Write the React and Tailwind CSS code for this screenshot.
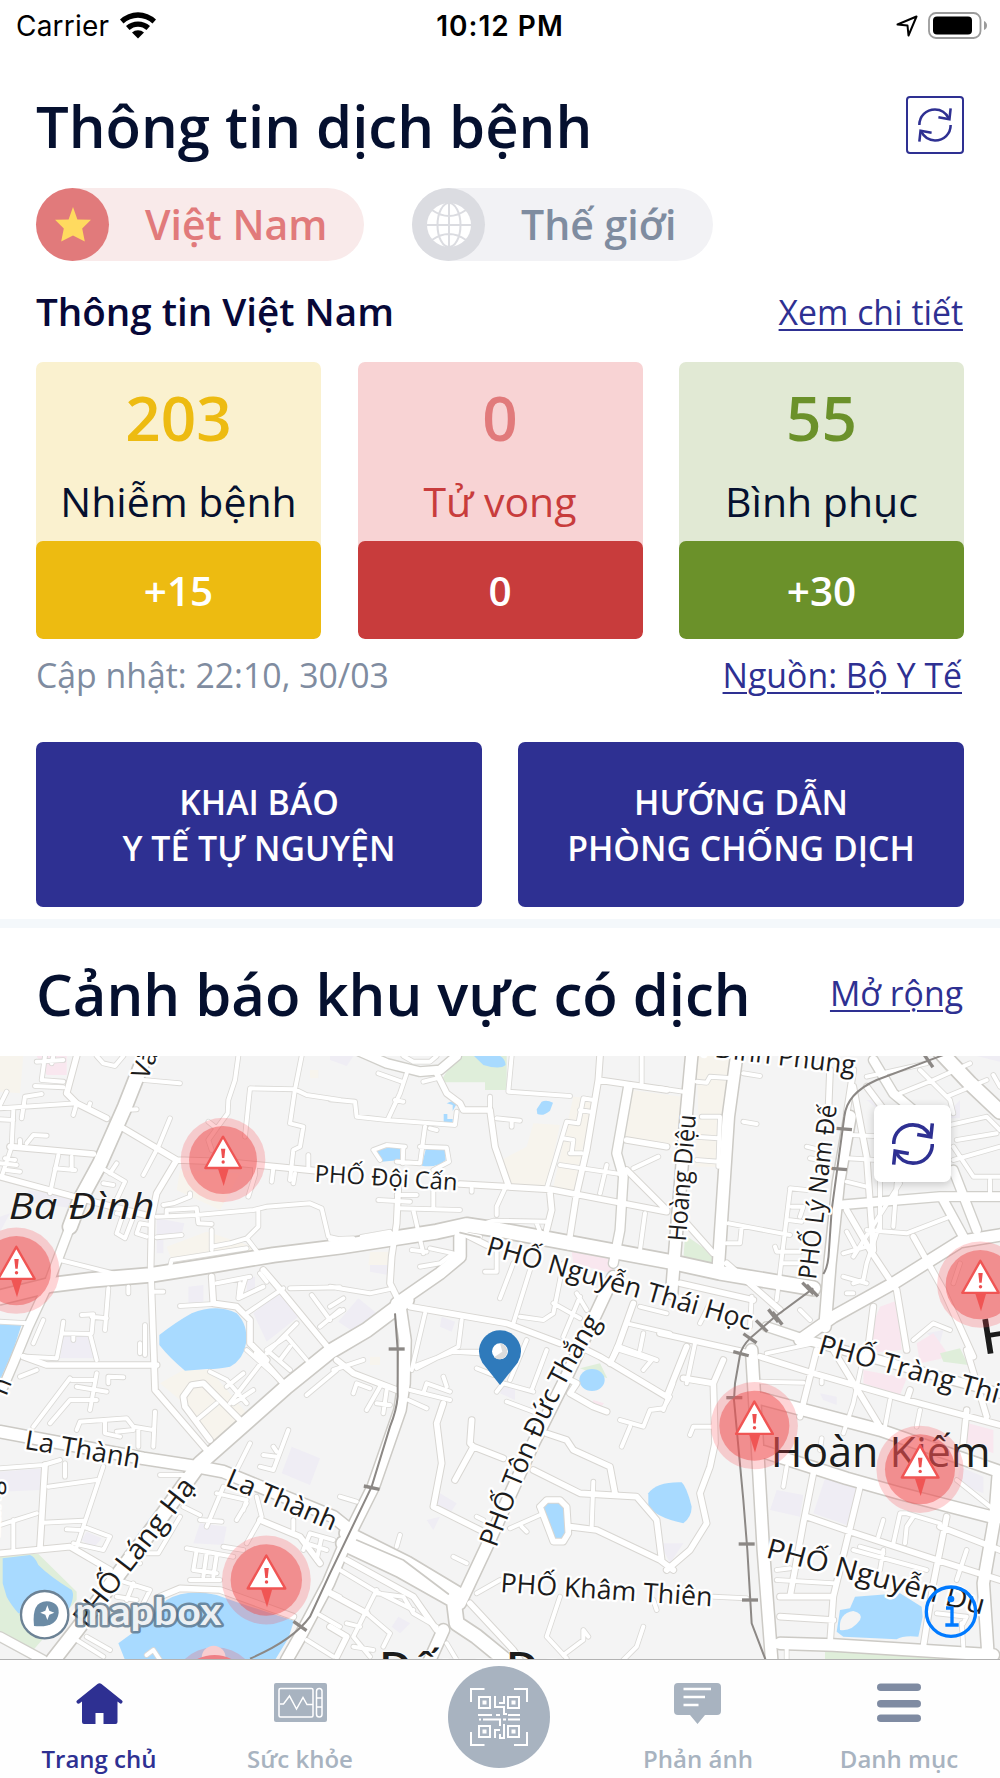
import React from 'react';

const stats = [
  { id: 'infected', total: '203', label: 'Nhiễm bệnh', delta: '+15', top: 'bg-[#faf1cf]', bottom: 'bg-[#edbb11]', number: 'text-[#edbb11]', text: 'text-[#05102f]' },
  { id: 'deaths', total: '0', label: 'Tử vong', delta: '0', top: 'bg-[#f8d3d4]', bottom: 'bg-[#c83c3c]', number: 'text-[#e17a7b]', text: 'text-[#c83c3c]' },
  { id: 'recovered', total: '55', label: 'Bình phục', delta: '+30', top: 'bg-[#e1e9d4]', bottom: 'bg-[#6b912a]', number: 'text-[#6b912a]', text: 'text-[#05102f]' },
];

// Map geometry, three units to a pixel
const smallRoads = [
  '0,175 230,160', '110,35 190,30', '125,90 190,95', '105,108 190,112', '135,18 125,90', '160,18 155,40',
  '65,205 75,140 125,132', '0,165 20,125', '40,180 35,290 5,380', '0,208 40,210', '80,280 100,255 140,257', '60,270 60,290',
  '175,315 150,430', '165,355 225,360', '215,320 215,360', '290,345 375,395 340,470', '330,370 350,340', '310,400 340,405',
  '430,90 540,100', '375,180 410,178', '510,205 475,290 430,375', '290,18 310,40 345,48 370,18',
  '715,18 705,90 685,150 683,190 650,235 625,215', '650,235 625,270 635,300', '735,260 750,115 885,118 920,135 1020,150',
  '905,18 885,118 870,220 910,230 900,290 880,300 870,390', '925,315 925,360', '745,440 765,375 765,350', '815,395 820,355',
  '885,370 880,400', '470,500 590,495 760,480 800,470 930,460 965,475 985,560 1020,568', '500,495 500,480 590,475 595,520 635,522',
  '490,465 520,460 570,440 570,430', '775,485 775,530 740,565 690,580 635,590', '635,540 635,600', '510,650 515,630 740,595',
  '740,565 775,610', '470,562 545,555', '350,550 375,565 400,500 350,490', '350,550 370,490', '410,550 420,520 450,525', '410,550 440,560',
  '180,630 340,670', '325,715 315,840', '245,795 280,793 275,850', '275,800 320,805', '190,815 185,850 270,852 290,930',
  '185,850 170,925 80,920', '220,855 220,870', '130,810 100,880', '0,815 85,820', '455,725 490,725', '385,710 385,730',
  '540,768 640,762', '650,700 750,680', '720,700 715,745 790,710', '735,690 720,740', '780,670 800,695', '850,715 740,790', '870,715 1020,712',
  '935,735 990,810', '960,830 1020,780', '800,910 890,820', '270,160 265,175', '220,195 230,160', '435,825 435,915', '420,880 420,910',
  '0,340 50,345', '20,360 60,365', '15,325 45,330', '990,770 1030,745', '1000,800 1030,780',
  '800,900 860,860 920,930', '840,930 870,890',
  '1210,18 1240,35 1290,35 1310,18', '1470,180 1470,140', '1490,205 1560,212', '1535,215 1535,230',
  '1370,185 1365,225 1160,210 1070,200 1065,155 990,148', '1220,70 1200,130 1165,205', '1135,70 1205,95', '1185,150 1210,155',
  '1270,95 1310,85', '1275,230 1260,340 1190,335', '1260,290 1340,293 1347,335 1300,360', '1210,290 1208,340',
  '1120,300 1160,285 1215,290', '1120,300 1140,330', '1290,235 1310,240', '1535,18 1525,125 1710,138', '1925,18 1925,100',
  '1640,415 1700,215 1735,220 1750,145 1780,150', '1690,265 1720,270 1715,310', '1740,180 1770,185', '1710,310 1745,310',
  '1680,345 1860,372', '1420,530 1480,512 1640,515', '1515,415 1490,470 1490,495', '1900,355 1975,320',
  '1820,345 1800,430', '1935,490 1920,600', '1135,450 1230,455', '1190,435 1250,435', '1200,475 1380,480', '1300,420 1300,475',
  '1240,480 1270,610', '1235,600 1280,605', '1085,560 1170,545', '990,568 1060,565', '1415,415 1415,425', '990,710 1110,730 1180,715',
  '1540,820 1590,660', '1500,745 1540,640', '1455,665 1490,665 1490,600', '1560,800 1630,810 1660,790 1690,640', '1660,760 1740,805',
  '1690,860 1740,740', '1730,730 1760,780', '1275,790 1235,960', '1385,810 1375,890 1250,955', '1385,905 1450,905',
  '1290,595 1360,610 1320,640 1260,650', '1880,820 2010,850', '1930,850 1920,900', '1860,890 1970,930', '1920,770 2000,790',
  '1610,520 1620,545', '1380,550 1440,560',
  '2090,95 2120,98 2130,80 2200,85', '2230,70 2280,78', '1980,115 2050,125', '2230,215 2270,222', '2085,260 2155,265',
  '2105,200 2160,200 2155,350', '2090,330 2155,335', '2185,520 2370,555', '2225,530 2220,580 2180,580', '2370,420 2330,750',
  '2370,415 2420,420', '2375,470 2410,470 2400,500', '2365,510 2405,515', '2325,590 2330,605 2400,605', '2350,640 2400,640',
  '2420,290 2460,300', '2430,325 2460,330', '2255,740 2250,830', '2130,760 2100,820', '2550,255 2620,258', '2545,325 2630,330',
  '2540,395 2600,410', '2690,400 2680,530', '2600,540 2720,550 2850,500', '2530,610 2600,590', '2540,545 2570,600',
  '2530,680 2600,700', '2600,640 2590,690 2560,700', '2540,730 2560,730', '2700,130 2800,90 2910,40', '2840,140 2960,90', '2600,80 2780,40',
  '2760,60 2850,150 2860,190', '2980,75 3000,110', '2850,225 2960,200 3000,240', '2870,270 2990,250', '2860,330 3000,290',
  '2860,290 2920,380 3000,380', '2970,390 2970,440', '2740,870 2800,820 2850,840', '2085,880 2060,1000', '2440,880 2300,910',
  '2600,640 2640,520', '2880,640 2860,700', '2400,780 2430,810', '2590,920 2560,1060 2530,1150', '2640,300 2640,540', '2560,620 2700,400',
  '60,980 110,960', '100,1130 210,985', '150,1120 210,1050 290,1050', '290,970 270,1080', '230,1010 320,1025', '215,990 280,990',
  '325,1000 325,980 370,982', '230,1140 240,1115 380,1105 400,1130 460,1140', '465,1085 460,1190', '315,1110 315,1150 360,1160',
  '350,1145 400,1140', '415,1140 415,1190', '0,1255 130,1245 180,1230', '195,1240 195,1280', '145,1310 290,1290', '310,1250 230,1490',
  '0,1425 110,1390', '130,1418 250,1412', '200,1438 240,1440', '250,1430 330,1460 310,1500 220,1480', '40,1410 40,1500',
  '590,1110 650,1060', '630,965 680,990 740,1060', '690,1060 790,930', '680,1010 730,970', '700,1060 760,1020', '740,900 830,980',
  '800,900 870,960', '820,1190 830,1205', '920,1035 1010,960', '865,1140 820,1260 780,1250', '790,1215 830,1220', '750,1180 710,1260',
  '480,1275 560,1275', '670,1310 620,1430', '600,1410 665,1415', '550,1370 600,1395', '650,1330 740,1350 730,1380', '770,1340 785,1400 740,1480',
  '740,1360 710,1410', '880,1410 880,1440', '910,1500 930,1450 1000,1470', '920,1480 980,1500', '965,1460 950,1530',
  '560,1495 700,1520', '590,1500 580,1560 650,1570', '620,1510 610,1580', '650,1515 640,1580', '570,1590 660,1590', '670,1490 730,1500',
  '380,1510 420,1540', '440,1510 475,1510 540,1400', '370,1595 450,1620 430,1660', '350,1640 410,1650', '400,1600 380,1650',
  '230,1770 310,1820', '260,1760 330,1800', '440,1815 460,1800 480,1830', '950,1690 1020,1730', '980,1620 1020,1640', '920,1770 1000,1820',
  '1000,960 1090,930', '1060,1030 1070,1000 1110,1015', '1100,1080 1140,1010', '1150,1090 1160,1020', '1130,1060 1170,1065',
  '1230,1020 1350,1050', '1225,1050 1280,1075', '1270,1030 1280,1000 1350,1025', '1330,980 1340,1010', '1240,950 1360,905 1440,910',
  '1430,955 1480,975', '1490,1025 1510,1000 1600,1025', '1520,1055 1600,1085', '1595,1020 1640,900', '1530,990 1580,870',
  '1830,940 1850,890', '1930,960 1955,930 1860,900', '1860,1110 1930,1130 1950,1080 1990,1075 2010,1040', '1890,1130 1865,1190',
  '1780,1295 1775,1430', '1530,1435 1620,1395', '1565,1430 1580,1445', '1020,1340 1070,1355', '1190,1490 1200,1455',
  '1360,1520 1400,1540', '1430,1400 1450,1410', '1430,1630 1500,1590', '1680,1640 1640,1760 1700,1825', '1690,1815 1750,1770 1750,1740 1765,1760',
  '1930,1730 1910,1790 1870,1830', '1970,1680 1960,1650', '1020,1560 1120,1620 1240,1680', '1130,1620 1060,1760',
  '1130,1630 1210,1640 1240,1690 1310,1730', '1100,1690 1170,1750 1150,1790', '1060,1790 1120,1800', '1040,1720 1080,1730', '1340,1780 1370,1830',
  '1060,1760 1110,1820', '2145,1130 2080,1130 2070,1155', '2280,995 2410,998', '2670,1050 2655,1130', '2760,1080 2750,1130',
  '2870,1290 2970,1370', '2650,1410 2635,1460', '2680,1480 2700,1390 2720,1390 2820,1420', '2740,1400 2720,1430 2715,1480',
  '2560,1500 2780,1560', '2650,1500 2640,1560', '2900,1500 2870,1590', '2140,1640 2240,1645', '2330,1560 2370,1555',
  '2330,1590 2500,1600', '2360,1790 2360,1830', '2885,1720 2890,1790', '2810,1690 2900,1700 2890,1720', '2465,1165 2460,1200', '2360,1250 2350,1310',
  '2650,1510 2580,1490', '2465,990 2465,1000', '1990,1080 2020,1000',
];

const mediumRoads = [
  '230,18 200,130 230,160 320,205', '30,290 280,312', '0,380 240,445 455,500', '370,235 530,330 470,430 455,500 452,650 462,930 465,1020 620,1200',
  '530,330 670,335 945,362', '635,680 640,760 710,770 750,810 750,880 800,930', '790,660 850,730 990,900',
  '1310,70 1340,130 1380,160 1390,180 1470,180 1485,290 1525,405', '1800,18 1795,90 2000,120', '1795,90 1760,300 1730,430 1705,590',
  '1380,402 1650,418 2000,485', '1650,430 1655,480 1640,540', '1195,410 1190,520 1175,620 1170,700 1195,750', '1230,770 1520,820 1680,880',
  '1880,270 2000,290', '1880,360 2000,480', '1900,760 1850,900 1830,940', '1380,545 1460,585', '1740,890 1800,920 2000,1040 2020,990 2060,890',
  '2060,520 2140,610', '2180,640 2340,780', '2040,700 2260,750', '2560,110 2600,320 2620,600', '2600,110 2660,190', '2540,480 2610,600 2690,720 2720,900',
  '2740,560 2830,720 2920,920', '2620,770 2600,930', '2490,60 2485,190', '2560,60 2540,190',
  '70,920 140,945 470,945', '630,1170 555,1070 550,1040 575,1005 610,1000 720,1110', '770,910 850,1000', '135,1245 120,1490',
  '0,1510 210,1490 330,1560', '780,1410 900,1460 960,1540', '480,1640 540,1615 660,1620 880,1700', '1010,930 1060,970 1190,1020',
  '1330,1060 1310,1120 1325,1240 1300,1370 1440,1440', '1415,1110 1410,1180 1420,1190 1510,1225', '1420,1190 1365,1290',
  '1690,980 1730,1000 1710,1030 1780,1070 1820,1085', '1640,1150 1700,1170 1720,1200 1830,1250 1845,1330',
  '1600,1260 1740,1330 1910,1340 1970,1410 1985,1530', '1620,1370 1640,1350 1680,1350 1700,1370 1705,1450 1690,1475 1660,1475 1620,1370',
  '1710,1430 1790,1440 1980,1530 2020,1560', '1410,1660 1540,1800 1560,1830', '1040,1530 1240,1640 1310,1740', '990,1630 1100,1690',
  '990,1730 1040,1760 1010,1820', '2170,930 2140,1000 2050,985', '2140,1000 2145,1180 2130,1250 2100,1330 2120,1420 2070,1500 2000,1560',
  '1980,850 2250,910', '2500,900 2640,1130', '2450,900 2400,1100', '2900,1080 2890,1180', '2730,1020 2720,1050',
  '2440,1270 2410,1420 2370,1640', '2580,1310 2500,1640 2490,1780', '2840,1400 2800,1600 2770,1790', '2820,1430 3000,1500',
  '2340,1640 2500,1640', '2340,1700 2500,1710', '2420,1400 2550,1445 2810,1530 3000,1590', '2960,1100 2900,900',
  '2280,920 2440,970 2580,1010 2720,1050 3000,1125',
];

const largeRoads = [
  '1080,5 1160,40 1260,65 1320,60 1370,18', '2620,30 2680,130 2740,180', '2520,465 2820,440 3000,440', '2830,450 2890,560', '2860,360 2930,540',
  '210,530 150,690 85,830 40,940 10,1010', '0,1760 130,1830', '1885,110 1850,310 1870,380 1860,540 1840,640', '2300,830 2420,870 3000,1030',
];

const majorRoads = [
  '0,1145 80,1160 430,1225 590,1250 670,1265 1000,1400 1050,1440', '2075,18 2060,180 2025,600 2015,730', '2210,18 2185,200 2155,650',
  '2550,200 2515,400 2490,640 2475,830', '2400,870 2500,800 2680,700 2880,575 3000,555', '2255,900 2270,1150 2290,1500 2315,1830',
  '2280,1045 2640,1140 3000,1265', '2290,1205 2430,1250 2540,1285 2700,1330 2990,1405', '2340,1780 2500,1785 2980,1815',
  '2995,1270 2985,1400 2950,1600 2965,1830', '1200,770 1215,870 1212,1000 1200,1080 1120,1310 1040,1470 985,1600 900,1760 860,1830',
  '1380,1660 1460,1490 1600,1180 1690,1000 1840,680', '1330,1740 1285,1840', '1380,560 1380,620 1320,670 1190,760',
];

const trunkRoads = [
  '440,5 375,170 300,340 240,450 210,530', '0,742 150,705 270,690 450,675 640,645 820,615 1020,590 1310,545 1400,525 1500,540 2010,635 2160,668 2440,715',
  '1220,750 1100,840 990,905 860,1010 600,1240 470,1420 230,1740 160,1830', '2820,5 2910,100 3000,185',
  '1030,1480 1200,1560 1360,1650', '1040,1450 1220,1540 1370,1630', '1360,1640 1370,1720 1430,1760 1540,1850',
];

const toPath = (roads) => roads.map((road) => `M${road}`).join(' ');

const roadLayers = [
  { d: toPath(smallRoads), width: 12, casing: 17, color: '#dad9d6' },
  { d: toPath(mediumRoads), width: 17, casing: 23, color: '#d8d6d2' },
  { d: toPath(largeRoads), width: 26, casing: 34, color: '#d0cfca' },
  { d: toPath(majorRoads), width: 34, casing: 43, color: '#cccac5' },
  { d: toPath(trunkRoads), width: 41, casing: 51, color: '#cccac5' },
];

const railPaths = [
  'M1185,790 L1193,900 L1193,1040 Q1190,1080 1170,1130 L1115,1310 L990,1570 L930,1700 Q880,1770 750,1826',
  'M2830,15 L2785,32 L2630,90 Q2540,130 2533,200 L2495,480 L2487,600 Q2485,650 2470,672 M2440,715 L2325,800 L2250,865 Q2225,890 2220,915 L2205,1000 L2202,1050 L2230,1350 L2242,1500 L2255,1720 L2297,1830',
];

const railTicks = [
  [1190, 897, 0], [1115, 1313, 12], [900, 1728, 35], [2785, 32, 55], [2532, 237, 5], [2517, 357, 5], [2424, 715, 45], [2437, 722, 45],
  [2320, 797, 52], [2332, 805, 52], [2285, 828, 45], [2250, 865, 35], [2223, 911, 15], [2203, 1043, 0], [2240, 1482, 0], [2250, 1650, 0],
];

const mapLabels = [
  { text: 'Văn Cao', x: 447, y: 90, angle: -68, size: 76 },
  { text: 'PHỐ Đội Cấn', x: 948, y: 393, angle: 3.5, length: 429, size: 71 },
  { text: 'Hoàng Diệu', x: 2062, y: 573, angle: -85.4, length: 380, size: 76 },
  { text: 'PHỐ Lý Nam Đế', x: 2453, y: 688, angle: -83.2, length: 526, size: 76 },
  { text: 'Phan Đình Phùng', x: 2568, y: 71, angle: 7, anchor: 'end', size: 78 },
  { text: 'PHỐ Nguyễn Thái Học', x: 1460, y: 611, angle: 16, length: 826, size: 80 },
  { text: 'La Thành', x: 76, y: 1194, angle: 9.7, length: 350, size: 80 },
  { text: 'La Thành', x: 678, y: 1304, angle: 23, length: 352, size: 80 },
  { text: 'PHỐ Láng Hạ', x: 265, y: 1735, angle: -52.3, length: 540, size: 84 },
  { text: 'PHỐ Khâm Thiên', x: 1505, y: 1624, angle: 3.9, length: 637, size: 80 },
  { text: 'PHỐ Nguyễn Du', x: 2300, y: 1520, angle: 14.8, length: 674, size: 84 },
  { text: 'PHỐ Tràng Thi', x: 2456, y: 907, angle: 15.7, length: 560, size: 82 },
  { text: 'n', x: 42, y: 994, angle: -68, anchor: 'end', size: 78 },
  { text: 'Láng', x: 6, y: 1290, angle: -88, anchor: 'end', size: 78 },
];

const alerts = [
  [669, 330, 1], [49, 662, 1.02], [2941, 704, 1.02], [2263, 1127, 1.03], [2760, 1258, 1.03], [799, 1590, 1.05], [645, 1925, 1.05],
];

const RefreshIcon = ({ className, strokeWidth = 7.5 }) => (
  <svg viewBox="0 0 100 100" className={className} fill="none" stroke="#2e3092" strokeWidth={strokeWidth}>
    <path d="M4 50C4 24 24 4.500 50 4.500C68 4.500 82 14 91 31" />
    <path d="M96 1L92.500 33L60 27.500" />
    <path d="M96 50C96 76 76 95.500 50 95.500C32 95.500 18 86 9 69" />
    <path d="M4 99L7.500 67L40 72.500" />
  </svg>
);

const AlertMarker = ({ x, y, scale }) => (
  <g transform={`translate(${x} ${y}) scale(${scale})`}>
    <circle r="127" fill="#fa4d55" fillOpacity="0.24" />
    <circle r="102" fill="#ee5252" fillOpacity="0.5" />
    <path d="M-15 26H17L2 78Z" fill="#f05554" />
    <path d="M0 -70L-53 24H54Z" fill="#fff" stroke="#f05554" strokeWidth="7" strokeLinejoin="round" />
    <path d="M-6 -34H7L4 -6H-3Z" fill="#ee4f4f" />
    <circle cx="0.500" cy="6" r="5" fill="#ee4f4f" />
  </g>
);

const MapCanvas = () => (
  <svg viewBox="0 18 3000 1809" className="block h-full w-full">
    <rect y="18" width="3000" height="1812" fill="#f4f4f4" />

    {/* Land use */}
    <g fill="#f7f4ed">
      <path d="M0 18H70L60 130L0 125Z" />
      <path d="M540 360L720 370L660 480L530 420Z" />
      <path d="M500 590L620 545L760 590L740 620L520 645Z" />
      <path d="M1110 605H1165V645H1105Z" />
      <path d="M1600 220L1680 225L1640 410L1520 400L1505 330L1580 290Z" />
      <path d="M1720 140L1780 145L1720 425L1660 410Z" />
      <path d="M1895 120L2045 140L2035 290L1875 260Z" />
      <path d="M2090 18H2200L2190 200L2150 350H2085L2095 200Z" />
      <path d="M480 1000L550 960H630L740 1090L640 1180L590 1130L540 1050Z" />
      <path d="M930 60h25v25h-25zM1110 920h30v25h-30z" />
    </g>
    <g fill="#efedf4">
      <path d="M85 420L225 440L215 475L85 455Z" />
      <path d="M470 505L553 520L545 555H470ZM470 570H490V610H470Z" />
      <path d="M565 710L610 705V760H565ZM740 680H765V730H740Z" />
      <path d="M760 790L835 725L895 800L800 875Z" />
      <path d="M190 855H275L280 925H180ZM0 500L30 490L0 545Z" />
      <path d="M0 1265L130 1255L120 1320L0 1325ZM875 1190L960 1225L930 1305L845 1270Z" />
      <path d="M600 1420L680 1430L670 1485L580 1480ZM260 1445L305 1465L280 1495L245 1470Z" />
      <path d="M1075 745L1130 790L1060 845L1015 815ZM1110 645H1165V675L1110 665Z" />
      <path d="M1325 800L1365 815L1355 845L1320 830ZM1510 1010H1545V1050L1500 1030Z" />
      <path d="M1320 1330L1370 1360L1350 1390L1310 1370ZM1280 1410L1320 1400L1300 1440ZM1195 1700L1230 1720L1200 1750L1175 1730Z" />
      <path d="M2480 1270L2575 1305L2540 1425L2440 1390ZM2330 1320L2410 1335L2400 1400L2310 1380Z" />
      <path d="M2880 1250L2950 1280V1330L2870 1300ZM2600 150H2650V190ZM2880 150V205H2830ZM2460 1030L2510 1040V1065L2470 1050Z" />
      <path d="M1980 1480H2050L2010 1540ZM2780 850L2830 840L2820 880Z" />
      <path d="M2930 18H3000V35ZM990 18H1060L1040 48L990 30Z" />
    </g>
    <g fill="#f9e7ef">
      <path d="M110 18H200V75H140Z" />
      <path d="M1715 605L1850 630L1835 670L1720 640Z" />
      <path d="M2620 820L2640 770L2695 750L2705 900L2600 910ZM2590 960L2720 985L2700 1035L2590 1000Z" />
      <path d="M2750 880L2800 850L2850 920L2760 940ZM2905 1120L2980 1140V1210L2900 1180ZM1780 1050L1812 1060L1800 1075L1775 1065Z" />
    </g>
    <g fill="#dfeeda">
      <path d="M1370 18H1520V120H1455V97H1320Z" />
      <path d="M2055 555L2138 612V648L2050 632Z" />
      <path d="M2820 910L2880 895L2905 945L2830 935Z" />
      <path d="M2475 1803L2820 1820V1830H2475Z" />
      <path d="M0 1512H115L230 1625V1650L100 1800L0 1760Z" />
      <path d="M1740 955L1800 940L1822 985L1780 970Z" />
    </g>

    {/* Lakes */}
    <g fill="#a8daff">
      <path d="M478 855Q530 815 575 790Q650 760 710 790Q745 825 738 880Q730 930 690 950Q650 958 620 957L555 962Q510 925 478 885Z" />
      <path d="M0 823H65L40 900L0 990Z" />
      <path d="M8 1525L90 1515Q105 1520 115 1545Q150 1580 215 1620Q228 1640 200 1690H55Q30 1660 20 1640L8 1600Z" />
      <path d="M355 1780L430 1725L500 1650Q560 1615 650 1635L720 1660L882 1712L865 1765L825 1830H375Z" />
      <path d="M1125 305Q1150 290 1200 293V330L1145 335ZM1278 295L1335 297L1337 330Q1310 355 1265 347Z" />
      <path d="M1340 160Q1370 145 1368 165L1358 183V165ZM1331 192H1342V207H1358V220H1331Z" />
      <path d="M1610 178L1625 155Q1640 148 1659 158L1650 182Q1630 200 1612 192ZM1422 18H1500Q1515 25 1517 45Q1500 60 1450 45Z" />
      <ellipse cx="1776" cy="990" rx="38" ry="33" />
      <path d="M1625 1360Q1660 1345 1690 1365L1700 1450Q1680 1480 1662 1465Q1630 1420 1625 1360Z" />
      <path d="M1945 1330Q1970 1295 2045 1297Q2060 1310 2075 1370Q2075 1400 2050 1420Q1960 1400 1945 1365Z" />
      <path d="M2510 1745L2520 1680L2550 1675L2565 1640L2700 1630L2765 1670L2768 1700L2755 1760Q2710 1755 2690 1768L2530 1760Z" />
    </g>
    <path d="M2520 1740Q2515 1690 2560 1683Q2590 1690 2580 1710Q2555 1745 2520 1740Z" fill="#f4f4f4" />

    {/* Streets */}
    <g fill="none" strokeLinecap="round" strokeLinejoin="round">
      {roadLayers.map((layer) => (
        <path key={layer.width} d={layer.d} stroke={layer.color} strokeWidth={layer.casing} />
      ))}
      {roadLayers.map((layer) => (
        <path key={layer.width} d={layer.d} stroke="#fff" strokeWidth={layer.width} />
      ))}
      <path d="M1070 1470L1210 1530L1345 1632M1380 548L1440 562" stroke="#cccac5" strokeWidth="5" />
    </g>
    <g fill="none" stroke="#8c8885" strokeWidth="6">
      {railPaths.map((d) => <path key={d} d={d} />)}
    </g>
    {railTicks.map(([x, y, angle]) => (
      <path key={`${x}-${y}`} d="M-24 0H24" transform={`translate(${x} ${y}) rotate(${angle})`} stroke="#8c8885" strokeWidth="10" />
    ))}

    {/* Street and district names */}
    <g
      className="font-['Open_Sans',sans-serif]" transform="translate(-5 2)"
      fill="#1c1c1c" stroke="#fff" strokeWidth="14" strokeLinejoin="round" paintOrder="stroke"
    >
      {mapLabels.map((label) => (
        <text
          key={`${label.text}-${label.x}`}
          transform={`translate(${label.x} ${label.y}) rotate(${label.angle})`}
          textAnchor={label.anchor}
          textLength={label.length}
          lengthAdjust="spacingAndGlyphs"
          fontSize={label.size}
        >
          {label.text}
        </text>
      ))}
      <path id="ton-duc-thang" d="M1494 1493Q1610 1180 1704 995Q1765 880 1880 700" fill="none" stroke="none" />
      <text fontSize="80"><textPath href="#ton-duc-thang">PHỐ Tôn Đức Thắng</textPath></text>
    </g>
    <g className="font-['Open_Sans',sans-serif]" fill="#1c1c1c" stroke="#fff" strokeOpacity="0.5" strokeWidth="6" paintOrder="stroke">
      <text x="26" y="506" fontSize="107" fontStyle="italic" textLength="438" lengthAdjust="spacingAndGlyphs">Ba Đình</text>
      <text x="2312" y="1251" fontSize="124" textLength="660" lengthAdjust="spacingAndGlyphs">Hoàn Kiếm</text>
      <text x="1136" y="1897" fontSize="124" fontWeight="600" textLength="560" lengthAdjust="spacingAndGlyphs">Đống Đa</text>
      <text transform="translate(2950 914) rotate(-9)" fontSize="147" fontWeight="600">Hà Nội</text>
    </g>

    {alerts.map(([x, y, scale]) => <AlertMarker key={x} x={x} y={y} scale={scale} />)}
    <circle cx="641" cy="1823" r="36" fill="#f8cdd0" />
    <path d="M585 1830Q645 1800 700 1830Z" fill="#ee7f86" />

    {/* Current position */}
    <path d="M1500 1005L1447 938A63 63 0 1 1 1553 938Z" fill="#2f7abb" />
    <circle cx="1500" cy="904" r="24" fill="#fff" />
    <path d="M1500 880A24 24 0 1 1 1482 922L1507 905Z" fill="#dcdcdc" />

    {/* Attribution */}
    <g stroke="#566f84">
      <circle cx="134" cy="1694" r="71" fill="#fff" stroke="#6c8295" strokeWidth="7" />
      <path d="M102 1728Q94 1655 140 1654Q177 1656 176 1688Q171 1735 102 1728Z" fill="#6b8ba5" stroke="none" />
      <path d="M142 1666L148 1682L163 1688L148 1694L142 1710L136 1694L121 1688L136 1682Z" fill="#fff" stroke="none" />
      <text
        x="226" y="1725" textLength="438" lengthAdjust="spacingAndGlyphs" className="font-['Lato',sans-serif]"
        fontSize="112" fontWeight="700" fill="#fff" fillOpacity="0.9" strokeWidth="15" strokeOpacity="0.75" strokeLinejoin="round" paintOrder="stroke"
      >
        mapbox
      </text>
    </g>
    <g fill="none" stroke="#007aff" strokeWidth="10">
      <circle cx="2853" cy="1685" r="74" />
      <path d="M2838 1674H2856V1725M2836 1725H2876" />
      <circle cx="2853" cy="1647" r="10" fill="#007aff" stroke="none" />
    </g>
  </svg>
);

const HomeIcon = () => (
  <svg viewBox="0 0 47 42" className="h-[42px] w-[47px]" fill="#2e3092">
    <path d="M21.500 1Q23.500 -.5 25.500 1L46 17.500Q47.500 19 45.500 20.500Q44.500 21 43.500 20L41.500 18.500V39Q41.500 41 39.500 41H27.500V30H19.500V41H8Q6 41 6 39V18.500L4 20Q3 21 1.500 20.500Q-.5 19 1 17.500Z" />
  </svg>
);

const HealthIcon = () => (
  <svg viewBox="0 0 53 39" className="h-[39px] w-[53px]" fill="none" stroke="#fff" strokeWidth="1.500">
    <rect width="53" height="39" rx="2" fill="#a8b3c0" stroke="none" />
    <rect x="5" y="5.500" width="34" height="28.500" rx="1.500" />
    <path d="M6 21H9.500L15.500 13L22.500 26L29 14.500L33 21.500H39" />
    <rect x="42.500" y="5.500" width="5.500" height="28.500" rx="2.750" />
    <path d="M42.500 15H48M42.500 24H48" />
  </svg>
);

const FeedbackIcon = () => (
  <svg viewBox="0 0 47 41" className="mr-[2px] h-[41px] w-[47px]">
    <path d="M4 0H43Q47 0 47 4V28Q47 32 43 32H31L23.500 41L16 32H4Q0 32 0 28V4Q0 0 4 0Z" fill="#a8b3c0" />
    <path d="M9.500 6H37M9.500 14H31M9.500 22H24.500" stroke="#fff" strokeWidth="2.500" />
  </svg>
);

const MenuIcon = () => (
  <svg viewBox="0 0 44 40" className="h-10 w-11" fill="#7f8ba2">
    <rect y="0.500" width="44" height="7.500" rx="3.750" />
    <rect y="17" width="44" height="7.500" rx="3.750" />
    <rect y="31.500" width="44" height="7.500" rx="3.750" />
  </svg>
);

const QrIcon = () => (
  <svg viewBox="0 0 58 58" className="size-[58px]" fill="none" stroke="#fff" strokeWidth="2">
    <path d="M1 14V1H14.500M44 1H57V14M57 44V57H44M14.500 57H1V44" />
    <path d="M9 9H20V20H9ZM38 9H49V20H38ZM9 38H20V49H9Z M38 38H49V49H38Z" />
    <path d="M12.500 12.500H16.500V16.500H12.500ZM41.500 12.500H45.500V16.500H41.500ZM12.500 41.500H16.500V45.500H12.500ZM41.500 41.500H45.500V45.500H41.500Z" fill="#fff" stroke="none" />
    <path d="M25 8V19H34V26H37M34 8V15H29M8 27H22M26 27H30M38 27H50M9 31.500H11M13 31.500H30V38M33 31.500H36M38 31.500H50M34 36V50H30V46M30 42H25V50" />
  </svg>
);

const tabs = [
  { id: 'home', name: 'Trang chủ', icon: HomeIcon },
  { id: 'health', name: 'Sức khỏe', icon: HealthIcon },
  { id: 'scan', icon: QrIcon },
  { id: 'feedback', name: 'Phản ánh', icon: FeedbackIcon },
  { id: 'menu', name: 'Danh mục', icon: MenuIcon },
];

const StatusBar = () => (
  <div className="flex h-[51px] items-center justify-between pr-3 pl-4 font-['Inter',sans-serif] text-[28px] text-black">
    <div className="flex flex-1 items-center gap-[11px]">
      <span className="tracking-[0.2px]">Carrier</span>
      <svg viewBox="0 0 36 27" className="h-[27px] w-9">
        <path d="M0 7.500A26 26 0 0 1 36 7.500L32.500 11.500A21 21 0 0 0 3.500 11.500Z" />
        <path d="M6 14A18 18 0 0 1 30 14L26.500 18A12.500 12.500 0 0 0 9.500 18Z" />
        <path d="M12 20.500A9 9 0 0 1 24 20.500L18 26.500Z" />
      </svg>
    </div>
    <span className="mr-1 font-semibold tracking-[1px]">10:12 PM</span>
    <div className="flex flex-1 items-center justify-end gap-[10px]">
      <svg viewBox="0 0 22 22" className="size-[22px]" fill="none" stroke="#000" strokeWidth="2" strokeLinejoin="round">
        <path d="M1.500 9.500L20.500 1.500L12.500 20.500L11.500 10.500Z" />
      </svg>
      <svg viewBox="0 0 60 27" className="h-[27px] w-[60px]">
        <rect x="1" y="1" width="51.500" height="25" rx="7" fill="none" stroke="#9b9b9b" strokeWidth="1.800" />
        <rect x="5" y="4.500" width="39" height="18" rx="4" />
        <path d="M56 9Q59 10.500 59 13.500Q59 16.500 56 18Z" fill="#9b9b9b" />
      </svg>
    </div>
  </div>
);

const App = () => {
  const activeTab = 'home';

  return (
    <div className="flex h-[1778px] w-[1000px] flex-col overflow-hidden bg-white font-['Open_Sans',sans-serif] text-[#05102f]">
      <StatusBar />

      {/* Case numbers */}
      <main className="px-9">
        <header className="mt-[45px] flex h-[58px] items-center justify-between">
          <h1 className="text-[58px] font-semibold">Thông tin dịch bệnh</h1>
          <button className="flex size-[58px] items-center justify-center rounded-[4px] border-2 border-[#2e3092]">
            <RefreshIcon className="size-[34px]" />
          </button>
        </header>

        <div className="mt-[34px] flex h-[73px] gap-12">
          <button className="flex w-[328px] items-center rounded-full bg-[#f9eaea] text-[41px] font-semibold text-[#e17a7b]">
            <span className="flex size-[73px] items-center justify-center rounded-full bg-[#e17a7b]">
              <svg viewBox="0 0 36 35" className="h-[35px] w-9" fill="#ffda5f">
                <path d="M18 0L22.400 12.500L36 12.800L27.200 21.500L29.800 34.500L18 28.500L6.200 34.500L8.800 21.500L0 12.800L13.600 12.500Z" />
              </svg>
            </span>
            <span className="ml-9 pt-px">Việt Nam</span>
          </button>
          <button className="flex w-[301px] items-center rounded-full bg-[#f2f2f5] text-[41px] font-semibold text-[#7f8ca0]">
            <span className="flex size-[73px] items-center justify-center rounded-full bg-[#dbdce1]">
              <svg viewBox="0 0 44 44" className="size-11" fill="none" stroke="#dbdce1" strokeWidth="2">
                <circle cx="22" cy="22" r="22" fill="#fff" stroke="none" />
                <path d="M22 0V44M0 22H44M5 7Q22 19 39 7M5 37Q22 25 39 37" />
                <ellipse cx="22" cy="22" rx="11.500" ry="22" />
              </svg>
            </span>
            <span className="ml-9 pt-px">Thế giới</span>
          </button>
        </div>

        <div className="mt-[25px] flex h-[51px] items-center justify-between">
          <h2 className="text-[38.6px] font-semibold text-[#070838]">Thông tin Việt Nam</h2>
          <a className="mr-px pt-px text-[33.8px] text-[#2e3092] underline decoration-2 underline-offset-4">Xem chi tiết</a>
        </div>

        <div className="mt-[25px] grid grid-cols-3 gap-[36.5px]">
          {stats.map((stat) => (
            <div key={stat.id} className={`overflow-hidden rounded-[7px] text-center ${stat.top}`}>
              <div className={`mt-[19px] text-[62px] leading-[72px] font-semibold ${stat.number}`}>{stat.total}</div>
              <div className={`mt-[18px] mb-[10px] text-[41px] leading-[60px] ${stat.text}`}>{stat.label}</div>
              <div className={`flex h-[98px] items-center justify-center rounded-[7px] pt-[2px] text-[40.5px] font-semibold text-white ${stat.bottom}`}>
                {stat.delta}
              </div>
            </div>
          ))}
        </div>

        <div className="mt-4 flex h-10 items-center justify-between text-[33.8px]">
          <span className="text-[#7f8ca0]">Cập nhật: 22:10, 30/03</span>
          <a className="mr-[2px] text-[#2e3092] underline decoration-2 underline-offset-4">Nguồn: Bộ Y Tế</a>
        </div>

        <div className="mt-[47px] grid h-[165px] grid-cols-2 gap-9 text-[33.8px] leading-[46px] font-semibold text-white">
          <button className="rounded-[7px] bg-[#2e3092]">KHAI BÁO<br />Y TẾ TỰ NGUYỆN</button>
          <button className="rounded-[7px] bg-[#2e3092]">HƯỚNG DẪN<br />PHÒNG CHỐNG DỊCH</button>
        </div>
      </main>

      <div className="mt-3 h-[9px] shrink-0 bg-[#f4f8fb]" />

      {/* Area warnings */}
      <section>
        <div className="flex h-32 items-center justify-between px-9 pt-[2px]">
          <h1 className="text-[58px] font-semibold">Cảnh báo khu vực có dịch</h1>
          <a className="mr-px text-[33.8px] text-[#2e3092] underline decoration-2 underline-offset-4">Mở rộng</a>
        </div>
        <div className="relative h-[603px] overflow-hidden">
          <MapCanvas />
          <button className="absolute top-[49px] right-[49px] flex size-[77px] items-center justify-center rounded-[7px] bg-white shadow-[0_2px_8px_rgba(0,0,0,0.2)]">
            <RefreshIcon className="size-[42px]" strokeWidth={8.5} />
          </button>
        </div>
      </section>

      {/* Bottom tabs */}
      <nav className="grid h-[119px] shrink-0 grid-cols-[198px_204px_194px_204px_198px] border-t border-[#b2b2b2] bg-[#fefefe]">
        {tabs.map((tab) => {
          const Icon = tab.icon;
          if (!tab.name) {
            return (
              <button key={tab.id} className="mt-[6px] flex size-[102px] items-center justify-center justify-self-center rounded-full bg-[#a8b3c0]">
                <Icon />
              </button>
            );
          }
          return (
            <button
              key={tab.id}
              className={`flex flex-col items-center pt-[23px] text-[24px] font-semibold ${activeTab === tab.id ? 'text-[#2e3092]' : 'text-[#a8b3c0]'}`}
            >
              <span className="flex h-[42px] items-start">
                <Icon />
              </span>
              <span className="mt-[17px] leading-[34px]">{tab.name}</span>
            </button>
          );
        })}
      </nav>
    </div>
  );
};

export default App;
